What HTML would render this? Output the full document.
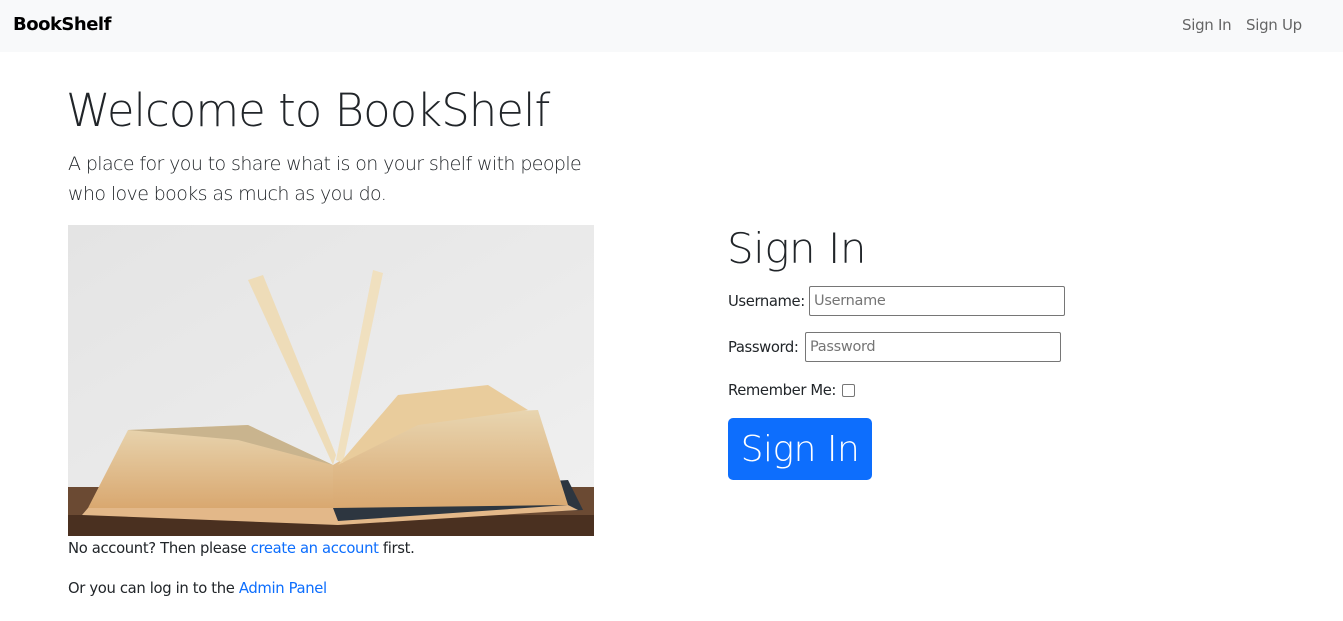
<!DOCTYPE html>
<html><head><meta charset="utf-8"><style>
*{box-sizing:border-box}
body{margin:0;width:1343px;height:621px;overflow:hidden;font-family:"DejaVu Sans","Liberation Sans",sans-serif;color:#212529;background:#fff;font-size:15px}
.nav{height:52px;background:#f8f9fa;position:relative}
.brand{position:absolute;left:13px;top:14px;font-size:18px;font-weight:bold;color:#000;letter-spacing:-0.5px}
.nl{position:absolute;top:16px;font-size:15px;color:rgba(0,0,0,.6);letter-spacing:-0.3px}
h1{position:absolute;left:66px;top:84px;margin:0;font-weight:300;font-size:45px;font-family:"DejaVu Sans",sans-serif;letter-spacing:-1px}
.lead{position:absolute;left:68px;top:149px;font-size:19px;line-height:30px;font-weight:300;width:560px;letter-spacing:-0.6px}
.img{position:absolute;left:68px;top:225px;width:526px;height:311px}
.t{position:absolute;left:68px;font-size:14.8px;letter-spacing:-0.35px}
a{color:#0d6efd;text-decoration:none}
h2{position:absolute;left:727px;top:224px;margin:0;font-weight:300;font-size:42px;letter-spacing:-0.5px}
.lab{position:absolute;left:728px;font-size:14.8px;letter-spacing:-0.4px}
.in{position:absolute;height:30px;border:1px solid #767676;border-radius:2px;font-size:14.5px;color:#757575;padding:6px 4px;letter-spacing:-0.3px}
.btn{position:absolute;left:728px;top:418px;width:144px;height:62px;background:#0d6efd;border-radius:5px;color:#fff;font-size:36px;font-weight:300;text-align:center;line-height:64px;letter-spacing:-0.5px}
.cb{position:absolute;left:842px;top:384px;width:13px;height:13px;border:1px solid #767676;border-radius:2px}
</style></head><body>
<div class="nav"><span class="brand">BookShelf</span><span class="nl" style="left:1182px">Sign In</span><span class="nl" style="left:1246px">Sign Up</span></div>
<h1>Welcome to BookShelf</h1>
<div class="lead">A place for you to share what is on your shelf with people<br>who love books as much as you do.</div>
<svg class="img" viewBox="0 0 526 311">
<defs><linearGradient id="w" x1="0" y1="0" x2="1" y2="1"><stop offset="0" stop-color="#e4e4e4"/><stop offset="1" stop-color="#f0f0f0"/></linearGradient>
<linearGradient id="p" x1="0" y1="0" x2="0" y2="1"><stop offset="0" stop-color="#e8d5b0"/><stop offset="1" stop-color="#d9a870"/></linearGradient></defs>
<rect width="526" height="311" fill="url(#w)"/>
<rect y="262" width="526" height="49" fill="#6b4a33"/>
<rect y="290" width="526" height="21" fill="#4a3020"/>
<path d="M14 290 L40 262 L270 270 L500 255 L515 285 L270 296 Z" fill="#2d3640"/>
<path d="M20 283 L60 205 L180 200 L265 240 L265 283 Z" fill="url(#p)"/>
<path d="M265 283 L265 240 L350 190 L470 185 L500 280 Z" fill="url(#p)"/>
<path d="M60 205 L180 200 L265 240 L170 215 Z" fill="#c9b48e"/>
<path d="M265 240 L180 55 L195 50 L268 230 Z" fill="#eedcb8"/>
<path d="M268 235 L305 45 L315 48 L275 238 Z" fill="#f0e0bf"/>
<path d="M270 240 L330 170 L420 160 L460 185 L350 200 Z" fill="#e9cc9c"/>
<path d="M20 283 L265 283 L270 296 L500 280 L510 285 L270 300 L14 290 Z" fill="#e3b889"/>
</svg>
<div class="t" style="top:540px">No account? Then please <a>create an account</a> first.</div>
<div class="t" style="top:580px">Or you can log in to the <a>Admin Panel</a></div>
<h2>Sign In</h2>
<div class="lab" style="top:293px">Username:</div><div class="in" style="left:809px;top:286px;width:256px">Username</div>
<div class="lab" style="top:339px">Password:</div><div class="in" style="left:805px;top:332px;width:256px">Password</div>
<div class="lab" style="top:382px">Remember Me:</div><div class="cb"></div>
<div class="btn">Sign In</div>
</body></html>
